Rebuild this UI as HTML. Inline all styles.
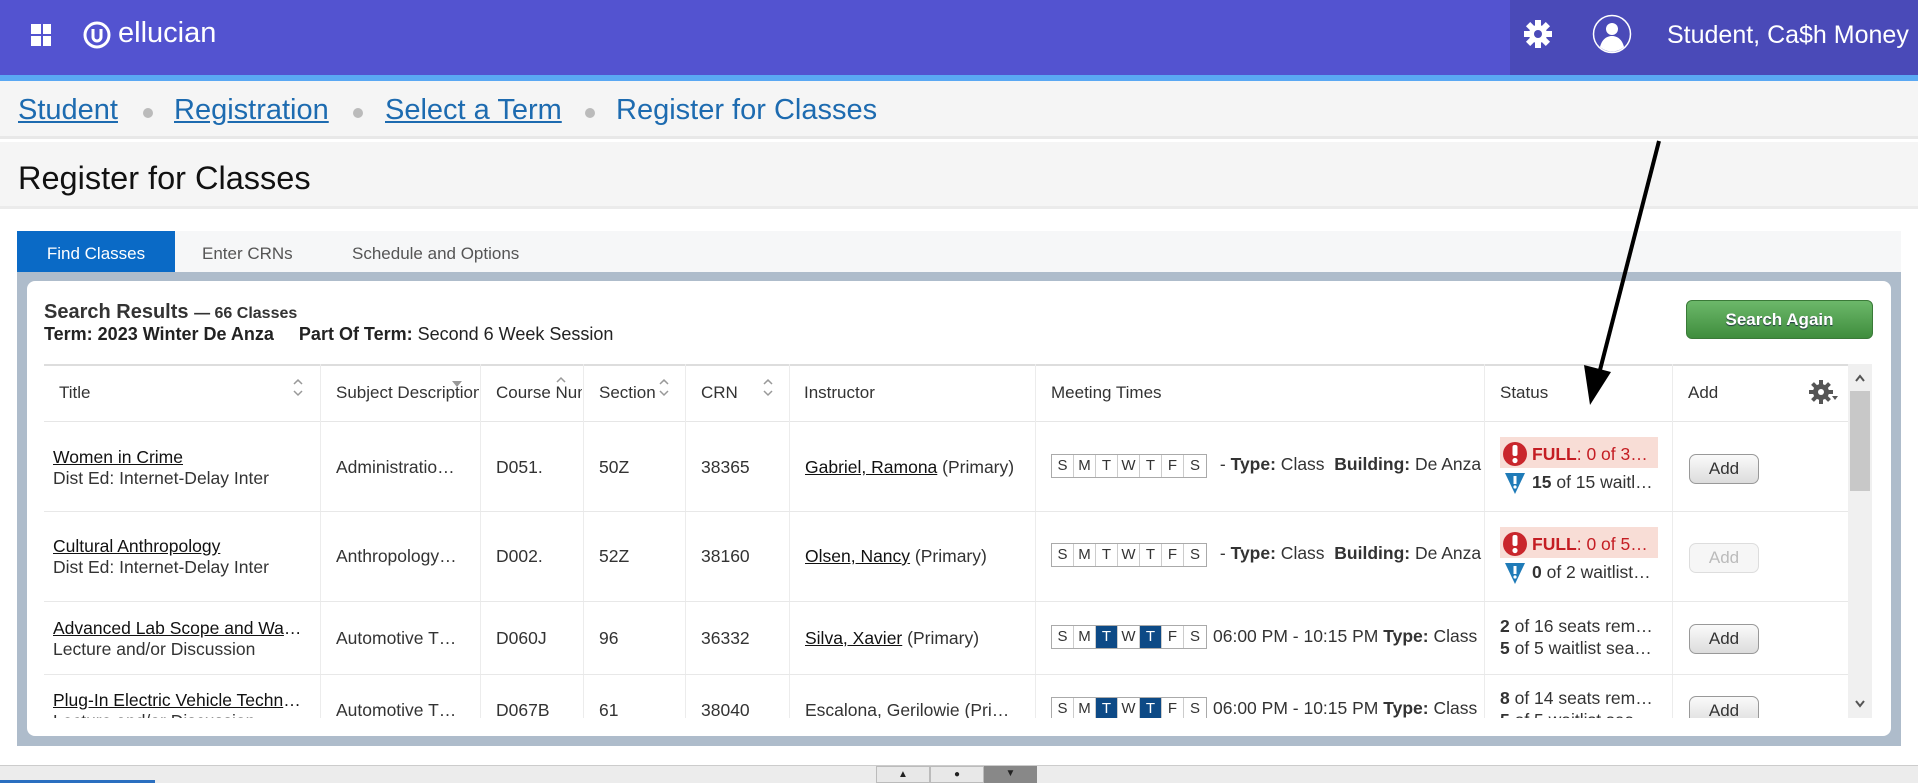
<!DOCTYPE html>
<html><head><meta charset="utf-8"><style>
*{margin:0;padding:0;box-sizing:border-box}
body{width:1918px;height:783px;overflow:hidden;background:#fff;font-family:"Liberation Sans",Arial,sans-serif;position:relative;color:#222}
.a{position:absolute}
.top{left:0;top:0;width:1918px;height:75px;background:#5353d0}
.topr{left:1510px;top:0;width:408px;height:75px;background:#4a4ab8}
.strip{left:0;top:75px;width:1918px;height:6px;background:#5aa8f3}
.bc{left:0;top:81px;width:1918px;height:58px;background:#f5f5f5;border-bottom:3px solid #e8e8e8}
.bc span{position:absolute;top:13px;font-size:29px;color:#1d6bb0}
.bc u{text-decoration:underline}
.bc span.dot{width:10px;height:10px;border-radius:50%;background:#bbb;top:27px}
.tt{left:0;top:142px;width:1918px;height:67px;background:#f5f5f5;border-bottom:3px solid #ebebeb}
.tabs{left:17px;top:231px;width:1884px;height:41px;background:#f6f7f8}
.tab{top:0;height:41px;font-size:17px;line-height:46px;color:#555}
.panel{left:17px;top:272px;width:1884px;height:474px;background:#aebccb}
.inner{left:27px;top:281px;width:1864px;height:455px;background:#fff;border-radius:8px}
.hd{top:364px;height:58px;border-top:2px solid #ddd;border-bottom:1px solid #e6e6e6;left:44px;width:1804px}
.h{top:383px;font-size:17px;color:#333}
.vl{width:1px;background:#ececec;top:364px;height:354px}
.hl{height:1px;background:#e8e8e8;left:44px;width:1804px}
.c{font-size:17.5px;color:#333;white-space:nowrap}
.days{display:flex;border:1px solid #aaa;height:24px;background:#fff}
.days i{font-style:normal;width:22px;text-align:center;font-size:15px;line-height:22px;border-right:1px solid #ccc;color:#333}
.days i:last-child{border-right:none}
.days i.on{background:#0d4a86;color:#fff}
.btn{width:70px;height:30px;border:1px solid #999;border-radius:7px;background:linear-gradient(#fafafa,#dcdcdc);font-size:17px;text-align:center;line-height:28px;color:#333}
.btn.dis{border-color:#ddd;color:#bbb;background:#f6f6f6}
.sort{color:#999}
</style></head><body>
<div class="a top"></div><div class="a topr"></div><div class="a strip"></div>
<div class="a" style="left:31px;top:24px;width:10px;height:10px;background:#fff"></div>
<div class="a" style="left:43px;top:24px;width:8px;height:10px;background:#fff"></div>
<div class="a" style="left:31px;top:36px;width:10px;height:10px;background:#fff"></div>
<div class="a" style="left:43px;top:36px;width:8px;height:10px;background:#fff"></div>
<svg class="a" style="left:82px;top:20px" width="30" height="30" viewBox="0 0 30 30"><circle cx="15" cy="15" r="12" fill="none" stroke="#fff" stroke-width="3"/><path d="M11 9v8a4 4 0 0 0 8 0V9" fill="none" stroke="#fff" stroke-width="3"/></svg>
<div class="a" style="left:118px;top:17px;font-size:29px;color:#fff">ellucian</div>
<svg class="a" style="left:1522px;top:18px" width="32" height="32" viewBox="0 0 32 32"><g fill="#fff"><circle cx="16" cy="16" r="9"/><rect x="13" y="2" width="6" height="28"/><rect x="2" y="13" width="28" height="6"/><rect x="13" y="2" width="6" height="28" transform="rotate(45 16 16)"/><rect x="13" y="2" width="6" height="28" transform="rotate(-45 16 16)"/></g><circle cx="16" cy="16" r="4" fill="#4a4ab8"/></svg>
<svg class="a" style="left:1592px;top:14px" width="40" height="40" viewBox="0 0 40 40"><circle cx="20" cy="20" r="18.5" fill="none" stroke="#fff" stroke-width="1.5"/><circle cx="20" cy="15" r="6" fill="#fff"/><path d="M8 33c2-8 7-11 12-11s10 3 12 11a18 18 0 0 1-24 0z" fill="#fff"/></svg>
<div class="a" style="left:1667px;top:21px;font-size:25px;color:#fff">Student, Ca$h Money</div>

<div class="a bc">
<span style="left:18px"><u>Student</u></span><span class="dot" style="left:143px"></span>
<span style="left:174px"><u>Registration</u></span><span class="dot" style="left:353px"></span>
<span style="left:385px"><u>Select a Term</u></span><span class="dot" style="left:585px"></span>
<span style="left:616px">Register for Classes</span>
</div>
<div class="a tt"><div class="a" style="left:18px;top:18px;font-size:32.5px;color:#111">Register for Classes</div></div>

<div class="a tabs">
<div class="a tab" style="left:0;width:158px;background:#0a6ac6;color:#fff;text-align:center">Find Classes</div>
<div class="a tab" style="left:185px">Enter CRNs</div>
<div class="a tab" style="left:335px">Schedule and Options</div>
</div>
<div class="a panel"></div>
<div class="a inner"></div>

<div class="a" style="left:44px;top:301px;font-size:20px;font-weight:bold;color:#333">Search Results <span style="font-size:16px">— 66 Classes</span></div>
<div class="a" style="left:44px;top:324px;font-size:18px;color:#222"><b>Term: 2023 Winter De Anza</b>&nbsp;&nbsp;&nbsp;&nbsp;&nbsp;<b>Part Of Term:</b> Second 6 Week Session</div>
<div class="a" style="left:1686px;top:300px;width:187px;height:39px;border-radius:6px;background:linear-gradient(#6cb86a,#3f8d3d);border:1px solid #3a7a38;color:#fff;font-weight:bold;font-size:17px;text-align:center;line-height:37px;text-shadow:0 1px 1px #234">Search Again</div>

<div class="a hd"></div>
<div class="a vl" style="left:320px"></div><div class="a vl" style="left:480px"></div><div class="a vl" style="left:583px"></div><div class="a vl" style="left:685px"></div><div class="a vl" style="left:789px"></div><div class="a vl" style="left:1035px"></div><div class="a vl" style="left:1484px"></div><div class="a vl" style="left:1672px"></div>
<div class="a hl" style="top:511px"></div><div class="a hl" style="top:601px"></div><div class="a hl" style="top:674px"></div>

<svg class="a" style="left:0;top:0" width="1918" height="783">
<g fill="none" stroke="#999" stroke-width="1.5">
<path d="M294 384l4-4 4 4M294 391l4 4 4-4"/>
<path d="M660 384l4-4 4 4M660 391l4 4 4-4"/>
<path d="M764 384l4-4 4 4M764 391l4 4 4-4"/>
<path d="M557 382l4-4 4 4"/>
</g>
<path d="M452 381h10l-5 6z" fill="#999"/>
</svg>
<div class="a h" style="left:59px">Title</div>
<div class="a h" style="left:336px;width:143px;overflow:hidden;white-space:nowrap">Subject Description</div>
<div class="a h" style="left:496px;width:86px;overflow:hidden;white-space:nowrap">Course Number</div>
<div class="a h" style="left:599px">Section</div>
<div class="a h" style="left:701px">CRN</div>
<div class="a h" style="left:804px">Instructor</div>
<div class="a h" style="left:1051px">Meeting Times</div>
<div class="a h" style="left:1500px">Status</div>
<div class="a h" style="left:1688px">Add</div>
<svg class="a" style="left:1808px;top:379px" width="32" height="28" viewBox="0 0 32 28"><g fill="#555"><circle cx="13" cy="13" r="8"/><rect x="11" y="1" width="4" height="24"/><rect x="1" y="11" width="24" height="4"/><rect x="11" y="1" width="4" height="24" transform="rotate(45 13 13)"/><rect x="11" y="1" width="4" height="24" transform="rotate(-45 13 13)"/></g><circle cx="13" cy="13" r="3" fill="#fff"/><path d="M24 17h6l-3 4z" fill="#555"/></svg>

<div class="a" style="left:1848px;top:364px;width:24px;height:354px;background:#f0f0f0"></div>
<div class="a" style="left:1850px;top:391px;width:20px;height:100px;background:#c8c8c8"></div>
<svg class="a" style="left:1848px;top:364px" width="24" height="354"><g fill="none" stroke="#555" stroke-width="2"><path d="M8 17l4-5 4 5"/><path d="M8 337l4 5 4-5"/></g></svg>

<div class="a" style="left:44px;top:422px;width:1804px;height:296px;overflow:hidden">
<div style="position:relative">
<div class="a c" style="left:9px;top:25px;color:#111"><u>Women in Crime</u></div>
<div class="a c" style="left:9px;top:46px">Dist Ed: Internet-Delay Inter</div>
<div class="a c" style="left:292px;top:35px">Administratio…</div>
<div class="a c" style="left:452px;top:35px">D051.</div>
<div class="a c" style="left:555px;top:35px">50Z</div>
<div class="a c" style="left:657px;top:35px">38365</div>
<div class="a c" style="left:761px;top:35px"><u style="color:#111">Gabriel, Ramona</u> (Primary)</div>
<div class="a days" style="left:1007px;top:32px"><i>S</i><i>M</i><i>T</i><i>W</i><i>T</i><i>F</i><i>S</i></div>
<div class="a c" style="left:1171px;top:32px;width:320px;overflow:hidden">&nbsp;- <b>Type:</b> Class&nbsp; <b>Building:</b> De Anza</div>
<div class="a" style="left:1456px;top:15px;width:158px;height:31px;background:#f8ddd6"></div>
<svg class="a" style="left:1459px;top:19px" width="24" height="26" viewBox="0 0 24 26"><circle cx="12" cy="13" r="12" fill="#c9262c"/><rect x="9.5" y="4" width="5" height="11" rx="2" fill="#fff"/><circle cx="12" cy="19.5" r="2.6" fill="#fff"/></svg>
<div class="a c" style="left:1488px;top:22px;color:#c41d23"><b>FULL</b>: 0 of 3…</div>
<svg class="a" style="left:1461px;top:49px" width="20" height="24" viewBox="0 0 20 24"><path d="M0 2h20L10 23z" fill="#1f7bb8"/><rect x="8.5" y="5" width="3" height="8" fill="#fff"/><circle cx="10" cy="16" r="1.6" fill="#fff"/></svg>
<div class="a c" style="left:1488px;top:50px"><b>15</b> of 15 waitl…</div>
<div class="a btn" style="left:1645px;top:32px">Add</div>

<div class="a c" style="left:9px;top:114px;color:#111"><u>Cultural Anthropology</u></div>
<div class="a c" style="left:9px;top:135px">Dist Ed: Internet-Delay Inter</div>
<div class="a c" style="left:292px;top:124px">Anthropology…</div>
<div class="a c" style="left:452px;top:124px">D002.</div>
<div class="a c" style="left:555px;top:124px">52Z</div>
<div class="a c" style="left:657px;top:124px">38160</div>
<div class="a c" style="left:761px;top:124px"><u style="color:#111">Olsen, Nancy</u> (Primary)</div>
<div class="a days" style="left:1007px;top:121px"><i>S</i><i>M</i><i>T</i><i>W</i><i>T</i><i>F</i><i>S</i></div>
<div class="a c" style="left:1171px;top:121px;width:320px;overflow:hidden">&nbsp;- <b>Type:</b> Class&nbsp; <b>Building:</b> De Anza</div>
<div class="a" style="left:1456px;top:105px;width:158px;height:31px;background:#f8ddd6"></div>
<svg class="a" style="left:1459px;top:109px" width="24" height="26" viewBox="0 0 24 26"><circle cx="12" cy="13" r="12" fill="#c9262c"/><rect x="9.5" y="4" width="5" height="11" rx="2" fill="#fff"/><circle cx="12" cy="19.5" r="2.6" fill="#fff"/></svg>
<div class="a c" style="left:1488px;top:112px;color:#c41d23"><b>FULL</b>: 0 of 5…</div>
<svg class="a" style="left:1461px;top:139px" width="20" height="24" viewBox="0 0 20 24"><path d="M0 2h20L10 23z" fill="#1f7bb8"/><rect x="8.5" y="5" width="3" height="8" fill="#fff"/><circle cx="10" cy="16" r="1.6" fill="#fff"/></svg>
<div class="a c" style="left:1488px;top:140px"><b>0</b> of 2 waitlist…</div>
<div class="a btn dis" style="left:1645px;top:121px">Add</div>

<div class="a c" style="left:9px;top:196px;color:#111"><u>Advanced Lab Scope and Wa</u>…</div>
<div class="a c" style="left:9px;top:217px">Lecture and/or Discussion</div>
<div class="a c" style="left:292px;top:206px">Automotive T…</div>
<div class="a c" style="left:452px;top:206px">D060J</div>
<div class="a c" style="left:555px;top:206px">96</div>
<div class="a c" style="left:657px;top:206px">36332</div>
<div class="a c" style="left:761px;top:206px"><u style="color:#111">Silva, Xavier</u> (Primary)</div>
<div class="a days" style="left:1007px;top:203px"><i>S</i><i>M</i><i class="on">T</i><i>W</i><i class="on">T</i><i>F</i><i>S</i></div>
<div class="a c" style="left:1169px;top:204px;width:322px;overflow:hidden">06:00 PM - 10:15 PM <b>Type:</b> Class</div>
<div class="a c" style="left:1456px;top:194px"><b>2</b> of 16 seats rem…</div>
<div class="a c" style="left:1456px;top:216px"><b>5</b> of 5 waitlist sea…</div>
<div class="a btn" style="left:1645px;top:202px">Add</div>

<div class="a c" style="left:9px;top:268px;color:#111"><u>Plug-In Electric Vehicle Techn</u>…</div>
<div class="a c" style="left:9px;top:289px">Lecture and/or Discussion</div>
<div class="a c" style="left:292px;top:278px">Automotive T…</div>
<div class="a c" style="left:452px;top:278px">D067B</div>
<div class="a c" style="left:555px;top:278px">61</div>
<div class="a c" style="left:657px;top:278px">38040</div>
<div class="a c" style="left:761px;top:278px">Escalona, Gerilowie (Pri…</div>
<div class="a days" style="left:1007px;top:275px"><i>S</i><i>M</i><i class="on">T</i><i>W</i><i class="on">T</i><i>F</i><i>S</i></div>
<div class="a c" style="left:1169px;top:276px;width:322px;overflow:hidden">06:00 PM - 10:15 PM <b>Type:</b> Class</div>
<div class="a c" style="left:1456px;top:266px"><b>8</b> of 14 seats rem…</div>
<div class="a c" style="left:1456px;top:288px"><b>5</b> of 5 waitlist sea…</div>
<div class="a btn" style="left:1645px;top:274px">Add</div>
</div></div>

<svg class="a" style="left:0;top:0" width="1918" height="783"><line x1="1659" y1="141" x2="1600" y2="370" stroke="#000" stroke-width="4"/><path d="M1590 405L1584 365L1611 372z" fill="#000"/></svg>

<div class="a" style="left:0;top:765px;width:1918px;height:18px;background:#ececec;border-top:1px solid #ccc"></div>
<div class="a" style="left:0;top:780px;width:155px;height:3px;background:#2a6fc0"></div>
<div class="a" style="left:876px;top:766px;width:54px;height:17px;background:#e8e8e8;border:1px solid #bbb;font-size:10px;text-align:center;line-height:15px">▲</div>
<div class="a" style="left:930px;top:766px;width:54px;height:17px;background:#e8e8e8;border:1px solid #bbb;font-size:10px;text-align:center;line-height:15px">●</div>
<div class="a" style="left:984px;top:766px;width:53px;height:17px;background:#888;font-size:10px;text-align:center;line-height:15px">▼</div>
</body></html>
